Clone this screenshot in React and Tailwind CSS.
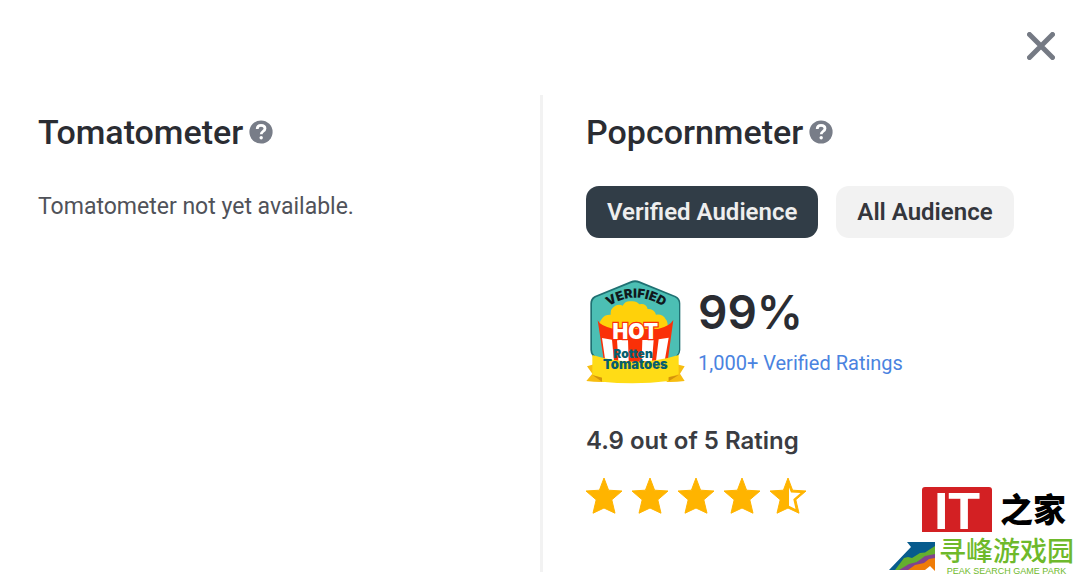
import { useState } from "react";

const STAR = "M18 0l4.6 12.2L36 13l-10.2 8.8L29 35.2 18 30 7 35.2l3.2-13.4L0 13l13.4-.8z";

function CloseIcon() {
    return (
        <svg viewBox="0 0 28 28" className="size-7" aria-hidden="true">
            <path
                d="M2.5 2.5l23 23M25.5 2.5l-23 23"
                stroke="#757a84"
                strokeWidth="5"
                strokeLinecap="round"
            />
        </svg>
    );
}

function HelpButton({ label }) {
    return (
        <button type="button" aria-label={label} className="cursor-pointer">
            <svg viewBox="0 0 24 24" className="size-6" aria-hidden="true">
                <circle cx="12" cy="12" r="11.6" fill="#787d88" />
                <path
                    d="M8.2 9C8.3 6.500 10 5.300 12 5.300c2.400 0 4 1.200 4 3.200 0 2.800-3.700 2.700-3.800 5.700"
                    fill="none"
                    stroke="#fff"
                    strokeWidth="2.800"
                />
                <circle cx="12.200" cy="17.800" r="1.700" fill="#fff" />
            </svg>
        </button>
    );
}

function MeterTitle({ children }) {
    return (
        <div className="flex items-center gap-1.5">
            <h2 className="text-[34px] leading-[42px] font-medium text-[#2a2c32]">{children}</h2>
            <HelpButton label={`About ${children}`} />
        </div>
    );
}

function HotBadge() {
    return (
        <svg
            viewBox="18 28 300 318"
            className="h-[106px] w-[100px] shrink-0"
            role="img"
            aria-label="Verified Hot"
        >
            <defs>
                <path id="verified-arc" d="M68 124 Q166 44 268 124" />
            </defs>
            <path
                d="M152 35q13-6 27 0l108 44q14 7 14 22v140q0 10-8 19l-30 40H70l-32-40q-7-8-7-19V101q0-15 13-22z"
                fill="#1f7072"
            />
            <path
                d="M154 40q11-5 23 0l107 43q13 7 13 20v137q0 9-7 17l-28 35H74l-31-35q-7-8-7-17V103q0-14 12-20z"
                fill="#4cbfb4"
            />
            <text fontFamily="Inter, sans-serif" fontWeight="900" fontSize="38" fill="#10181c">
                <textPath href="#verified-arc" startOffset="50%" textAnchor="middle">
                    VERIFIED
                </textPath>
            </text>
            {/* Popcorn */}
            <path
                d="M60 182q-7-20 5-34 8-14 27-13-2-18 14-27 12-5 22 0 8-15 24-13 16-3 26 9 20-4 25 14 21 0 25 17 22-2 29 14 8 6 6 34z"
                fill="#ffd10a"
            />
            {/* Bucket */}
            <path
                d="M53 152q6 16 48 26h133q35-8 46-27l-19 138H74z"
                fill="#fa3008"
            />
            <path
                d="M66 205l30 5 6 65H76zM111 211h33l2 63h-31zM187 211h34l-5 63h-31zM236 209l30-5-12 70h-26z"
                fill="#fff"
            />
            <text
                x="166"
                y="207"
                textAnchor="middle"
                fontFamily="Inter, sans-serif"
                fontWeight="900"
                fontSize="63"
                fill="#fff"
                stroke="#fa3008"
                strokeWidth="7"
                paintOrder="stroke"
            >
                HOT
            </text>
            {/* Ribbon */}
            <path
                d="M42 284l-21 6 16 22-18 22q28 4 54 3v-40zM290 284l24 6-14 22 14 22q-28 4-54 3v-40z"
                fill="#f7bd10"
            />
            <path d="M37 256q130 40 259 0v58q-14 5-30 8v12q-100 12-200 2v-12q-16-3-29-8z" fill="#ffdc16" />
            <path d="M37 316l29 8v12zM296 316l-30 7v12z" fill="#d3930b" />
            <text
                fontFamily="Inter, sans-serif"
                fontWeight="900"
                fill="#075e6e"
                textAnchor="middle"
            >
                <tspan x="159" y="266" fontSize="36">Rotten</tspan>
                <tspan x="166" y="297" fontSize="39">Tomatoes</tspan>
            </text>
        </svg>
    );
}

function Star({ half }) {
    return (
        <svg viewBox="0 0 36 36" className="size-9" aria-hidden="true">
            <path d={STAR} fill="#ffb400" stroke="#ffb400" strokeLinejoin="round" />
            {half && (
                <path d="M19 9.500L21 14.500l9.500.6-7.200 6.200 2.200 9.600-6.500-3.200z" fill="#fff" />
            )}
        </svg>
    );
}

function Watermarks() {
    return (
        <div className="absolute right-1.5 bottom-1.5 flex flex-col items-end">
            <div className="mr-2 flex h-[45px] items-start gap-2" aria-label="IT之家">
                <span className="flex h-[45px] w-[70px] justify-center rounded-t-[3px] bg-[#d32023] font-['Liberation_Sans',sans-serif] text-[52px] leading-[49px] font-bold text-white">
                    IT
                </span>
                <span className="font-['Liberation_Sans','Noto_Sans_CJK_SC',sans-serif] text-[33px] leading-[48px] font-black text-black">
                    之家
                </span>
            </div>
            <div className="mt-1.5 flex items-start">
                <svg viewBox="0 0 46 30" className="mt-1 mr-1 h-[30px] w-[46px]" aria-hidden="true">
                    <path d="M18 0h28v12L12 28H0L22 5z" fill="#075b8d" />
                    <path d="M6 28l9-12 4-1 4 1 8-5 5-.5L46 4v9L28 20 16 28z" fill="#64af2e" />
                    <path d="M10 28l10-6 8-2 8-6 10-2v5l-12 6-12 5z" fill="#82438e" />
                    <path d="M19 28l7-5 9-2 5-4 6-1v13l-5-5-5 4z" fill="#ef7c08" />
                </svg>
                <div className="flex flex-col items-center text-[#6eb92b]">
                    <span className="font-['Liberation_Sans','Noto_Sans_CJK_SC',sans-serif] text-[27px] leading-[28px] font-medium">
                        寻峰游戏园
                    </span>
                    <span className="font-['Liberation_Sans',sans-serif] text-[9px] leading-[10px]">
                        PEAK SEARCH GAME PARK
                    </span>
                </div>
            </div>
        </div>
    );
}

const AUDIENCES = ["Verified Audience", "All Audience"];

export default function App() {
    const [audience, setAudience] = useState(AUDIENCES[0]);

    return (
        <main className="relative flex min-h-screen flex-col bg-white pb-2.5 font-['Roboto',sans-serif] text-[#2a2c32]">
            <header className="flex justify-end px-[25px] pt-8 pb-[35px]">
                <button type="button" aria-label="Close" className="cursor-pointer">
                    <CloseIcon />
                </button>
            </header>

            <div className="grid flex-1 grid-cols-2">
                <section className="px-[38px] pt-4">
                    <MeterTitle>Tomatometer</MeterTitle>
                    <p className="mt-10 text-[23px] leading-[28px] text-[#505259]">
                        Tomatometer not yet available.
                    </p>
                </section>

                <section className="border-l-3 border-[#f2f2f2] pt-4 pl-[43px]">
                    <MeterTitle>Popcornmeter</MeterTitle>

                    <div className="mt-[33px] flex gap-[18px]">
                        {AUDIENCES.map((name) => (
                            <button
                                key={name}
                                type="button"
                                aria-pressed={audience === name}
                                onClick={() => setAudience(name)}
                                className={`h-[52px] cursor-pointer rounded-[13px] px-[21px] text-[24px] font-semibold whitespace-nowrap
                      ${audience === name ? "bg-[#313d47] text-[#eeeeee]" : "bg-[#f2f2f2] text-[#34363c]"}`}
                            >
                                {name}
                            </button>
                        ))}
                    </div>

                    <div className="mt-[41px] flex gap-3">
                        <HotBadge />
                        <div className="flex flex-col items-start">
                            <span className="mt-1.5 font-['Inter',sans-serif] text-[46px] leading-[54px] font-semibold">
                                99%
                            </span>
                            <a href="#ratings" className="mt-2.5 text-[20px] leading-[28px] text-[#4a83e0]">
                                1,000+ Verified Ratings
                            </a>
                        </div>
                    </div>

                    <p className="mt-[42px] font-['Inter',sans-serif] text-[24px] leading-[28px] font-semibold text-[#3a3c42]">
                        4.9 out of 5 Rating
                    </p>
                    <div className="mt-[23px] flex gap-2.5" role="img" aria-label="4.9 out of 5 stars">
                        {[1, 2, 3, 4, 5].map((n) => (
                            <Star key={n} half={n === 5} />
                        ))}
                    </div>
                </section>
            </div>

            <Watermarks />
        </main>
    );
}
